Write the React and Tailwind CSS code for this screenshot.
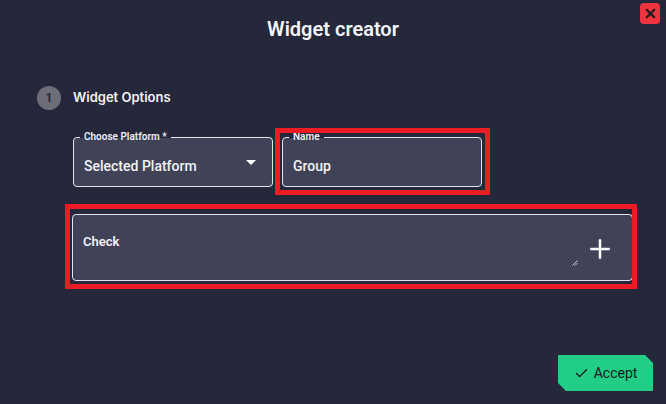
import React from "react";
import { Plus, Check, X } from "lucide-react";

function Field({ label, children, className = "" }) {
  return (
    <div
      className={`relative rounded-[4px] border border-[#e4e4e8] bg-[#404257] ${className}`}
    >
      <span className="absolute left-[6px] top-[-7px] h-[12px] px-[4px] text-[10px] font-semibold leading-[12px] text-[#eeeef2] bg-[linear-gradient(to_bottom,#25273b_58%,#404257_58%)]">
        {label}
      </span>
      {children}
    </div>
  );
}

export default function App() {
  return (
    <div
      className="relative flex h-[404px] w-[666px] flex-col overflow-hidden bg-[#25273b] text-white"
      style={{ fontFamily: "Roboto, 'Liberation Sans', sans-serif" }}
    >
      {/* header */}
      <div className="flex h-[58px] items-center justify-center">
        <h1 className="text-[20px] font-semibold text-[#f4f4f6]">Widget creator</h1>
      </div>
      <button className="absolute right-[6px] top-[3px] flex h-[21px] w-[20px] items-center justify-center rounded-[4px] bg-[#ee3340]">
        <X size={15} strokeWidth={3.5} className="text-[#1a1a1a]" />
      </button>

      {/* step */}
      <div className="mt-[28px] flex items-center pl-[37px]">
        <div className="flex h-[24px] w-[24px] items-center justify-center rounded-full bg-[#6c6d78] text-[13px] font-medium text-[#222330]">
          1
        </div>
        <span className="ml-[12px] font-['Inter'] text-[13px] font-semibold text-[#f2f2f4]">Widget Options</span>
      </div>

      {/* fields */}
      <div className="mt-[27px] flex gap-[9px] pl-[73px]">
        <Field label="Choose Platform *" className="flex h-[50px] w-[200px] items-center pl-[10px] pr-[16px] pt-[8px]">
          <span className="flex-1 text-[14px] font-medium text-[#f2f2f4]">Selected Platform</span>
          <span className="mb-[8px] h-0 w-0 border-x-[5px] border-t-[5px] border-x-transparent border-t-white" />
        </Field>
        <div className="relative">
          <Field label="Name" className="flex h-[50px] w-[200px] items-center pl-[10px] pt-[8px]">
            <span className="text-[14px] font-medium text-[#f2f2f4]">Group</span>
          </Field>
          <span className="pointer-events-none absolute -bottom-[8px] -left-[7px] -right-[8px] -top-[9px] border-[5px] border-[#ed1c24]" />
        </div>
      </div>

      {/* check */}
      <div className="relative ml-[72px] mt-[27px] w-[561px]">
        <div className="relative flex h-[67px] rounded-[4px] border border-[#e4e4e8] bg-[#404257]">
          <span className="pl-[10px] pt-[17px] text-[13px] font-semibold text-[#f2f2f4]">Check</span>
          <div className="ml-auto flex items-end pb-[14px]">
            <svg width="6" height="6" viewBox="0 0 6 6" className="mr-[7px]">
              <path d="M0.5 5.5L5.5 0.5M3 5.5L5.5 3" stroke="#cfcfd6" strokeWidth="1" />
            </svg>
          </div>
          <div className="flex items-center pr-[17px] pt-[2px]">
            <Plus size={30} strokeWidth={2} className="text-white" />
          </div>
        </div>
        <span className="pointer-events-none absolute -bottom-[8px] -left-[7px] -right-[4px] -top-[10px] border-[5px] border-[#ed1c24]" />
      </div>

      {/* footer */}
      <div className="mt-auto flex justify-end pb-[13px] pr-[13px]">
        <button className="flex h-[36px] w-[95px] items-center justify-center gap-[5px] bg-[#22cd86] text-[14px] text-[#16171f] [clip-path:polygon(0_0,calc(100%_-_8px)_0,100%_8px,100%_100%,8px_100%,0_calc(100%_-_8px))]">
          <Check size={15} strokeWidth={2.2} />
          Accept
        </button>
      </div>
    </div>
  );
}
